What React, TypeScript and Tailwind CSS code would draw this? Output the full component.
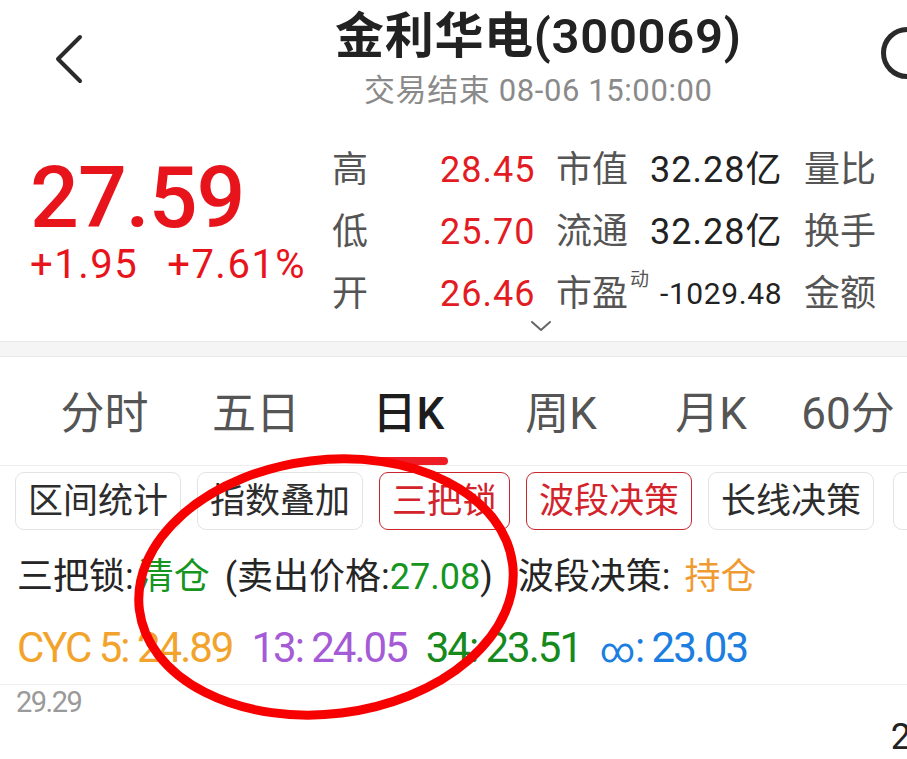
import React from 'react';

const tabs = [
  { label: '分时', w: 'w-[151px]' },
  { label: '五日', w: 'w-[152px]' },
  { label: '日K', w: 'w-[153px]' },
  { label: '周K', w: 'w-[152px]' },
  { label: '月K', w: 'w-[148px]' },
  { label: '60分', w: 'w-[126px]' },
];

const tools = [
  { label: '区间统计', active: false },
  { label: '指数叠加', active: false },
  { label: '三把锁', active: true },
  { label: '波段决策', active: true },
  { label: '长线决策', active: false },
  { label: '更多', active: false },
];

export default function App() {
  return (
    <div className="relative h-[759px] w-[907px] overflow-hidden bg-white font-[family-name:Roboto,'Noto_Sans_CJK_SC',sans-serif] text-[#222]">
      {/* header */}
      <header className="flex h-[128px] items-start">
        <div className="w-[335px] shrink-0 pl-[52px] pt-[34px]">
          <svg width="34" height="50" viewBox="0 0 34 50" fill="none">
            <path d="M28 3 L6 25 L28 47" stroke="#2a2a2a" strokeWidth="4" strokeLinecap="round" strokeLinejoin="round" />
          </svg>
        </div>
        <div className="flex flex-col items-center pt-[8px]">
          <h1 className="whitespace-nowrap text-[49px] font-semibold leading-[58px] tracking-[0.7px] text-[#222]">金利华电(300069)</h1>
          <p className="mt-[7px] whitespace-nowrap text-[31px] leading-[36px] tracking-[0.6px] text-[#8a8a8a]">交易结束 08-06 15:00:00</p>
        </div>
        <div className="flex flex-1 justify-end pt-[27px]">
          <div className="mr-[-26px] h-[52px] w-[52px] rounded-full border-[5px] border-[#2a2a2a]" />
        </div>
      </header>

      {/* quote */}
      <section className="flex h-[213px] items-start">
        <div className="w-[332px] shrink-0 pl-[30px] pt-[27px] text-[#e8141c]">
          <div className="text-[86px] font-medium leading-[86px] tracking-[-1px]">27.59</div>
          <div className="mt-[3px] flex gap-[29px] text-[40px] leading-[42px] tracking-[1.5px]">
            <span>+1.95</span>
            <span>+7.61%</span>
          </div>
        </div>
        <div className="relative grid grid-cols-[108px_116px_94px_154px_auto] grid-rows-[62px_62px_62px] items-center pt-[11px] text-[36px] leading-[44px]">
          <span className="text-[#555]">高</span>
          <span className="tracking-[1px] text-[#e31b23]">28.45</span>
          <span className="text-[#555]">市值</span>
          <span className="tracking-[1px] text-[#222]">32.28亿</span>
          <span className="text-[#555]">量比</span>

          <span className="text-[#555]">低</span>
          <span className="tracking-[1px] text-[#e31b23]">25.70</span>
          <span className="text-[#555]">流通</span>
          <span className="tracking-[1px] text-[#222]">32.28亿</span>
          <span className="text-[#555]">换手</span>

          <span className="text-[#555]">开</span>
          <span className="tracking-[1px] text-[#e31b23]">26.46</span>
          <span className="relative text-[#555]">
            市盈
            <sup className="absolute left-[74px] top-[-2px] text-[19px] leading-none">动</sup>
          </span>
          <span className="pl-[10px] text-[30px] tracking-[0.6px] text-[#222]">-1029.48</span>
          <span className="text-[#555]">金额</span>

          <svg className="absolute left-[198px] top-[192px]" width="22" height="12" viewBox="0 0 22 12" fill="none">
            <path d="M2 2 L11 10 L20 2" stroke="#666" strokeWidth="2" strokeLinecap="round" strokeLinejoin="round" />
          </svg>
        </div>
      </section>

      {/* divider band */}
      <div className="h-[16px] border-y border-[#e9e9e9] bg-[#f5f5f5]" />

      {/* period tabs */}
      <nav className="flex h-[109px] items-start border-b border-[#eeeeee] pl-[29px]">
        {tabs.map((t) => {
          const active = t.label === '日K';
          return (
            <div key={t.label} className={`flex ${t.w} shrink-0 flex-col items-center pt-[30px]`}>
              <span className={`whitespace-nowrap text-[44px] leading-[54px] ${active ? 'font-medium text-[#1d1d1d]' : 'text-[#555]'}`}>
                {t.label}
              </span>
              <span className={`mt-[16px] h-[8px] w-[78px] rounded-full ${active ? 'bg-[#ee1c25]' : 'bg-transparent'}`} />
            </div>
          );
        })}
      </nav>

      {/* indicator buttons */}
      <div className="flex gap-[16px] pl-[15px] pt-[6px]">
        {tools.map((b, i) => (
          <div
            key={b.label}
            className={`flex h-[58px] shrink-0 items-center rounded-[9px] border text-[35px] leading-none ${
              i === tools.length - 1 ? 'ml-[3px] px-[14px]' : 'px-[12px]'
            } ${b.active ? 'border-[#c9262e] text-[#d3232b]' : 'border-[#e3e3e3] text-[#2d2d2d]'}`}
          >
            {b.label}
          </div>
        ))}
      </div>

      {/* signal text */}
      <p className="mt-[24px] flex whitespace-nowrap pl-[17px] text-[36px] leading-[46px] text-[#252525]">
        <span>三把锁:</span>
        <span className="ml-[4px] text-[#16951f]">清仓</span>
        <span className="ml-[15px]">
          (卖出价格:<span className="text-[#16951f]">27.08</span>)
        </span>
        <span className="ml-[25px]">波段决策:</span>
        <span className="ml-[14px] text-[#f09b32]">持仓</span>
      </p>

      {/* cyc line */}
      <p className="mt-[25px] flex items-baseline gap-[19px] whitespace-nowrap pl-[17px] text-[42px] leading-[46px] tracking-[-2px]">
        <span className="text-[#f2a32c]">CYC 5: 24.89</span>
        <span className="text-[#a55ad6]">13: 24.05</span>
        <span className="text-[#168a1c]">34: 23.51</span>
        <span className="text-[#1b7ee0]">
          <span className="text-[34px] tracking-normal">∞</span>: 23.03
        </span>
      </p>

      <div className="mt-[11px] border-t border-[#eeeeee]" />
      <div className="flex items-start justify-between pl-[16px]">
        <span className="pt-[1px] text-[29px] leading-[32px] tracking-[-1.5px] text-[#9a9a9a]">29.29</span>
        <span className="mr-[-4px] pt-[32px] text-[36px] leading-[40px] text-[#222]">2</span>
      </div>

      {/* hand-drawn annotation */}
      <svg className="pointer-events-none absolute left-0 top-0" width="907" height="759" viewBox="0 0 907 759" fill="none">
        <ellipse cx="326" cy="587" rx="188" ry="127" transform="rotate(-7 326 587)" stroke="#f70000" strokeWidth="9" />
      </svg>
    </div>
  );
}
